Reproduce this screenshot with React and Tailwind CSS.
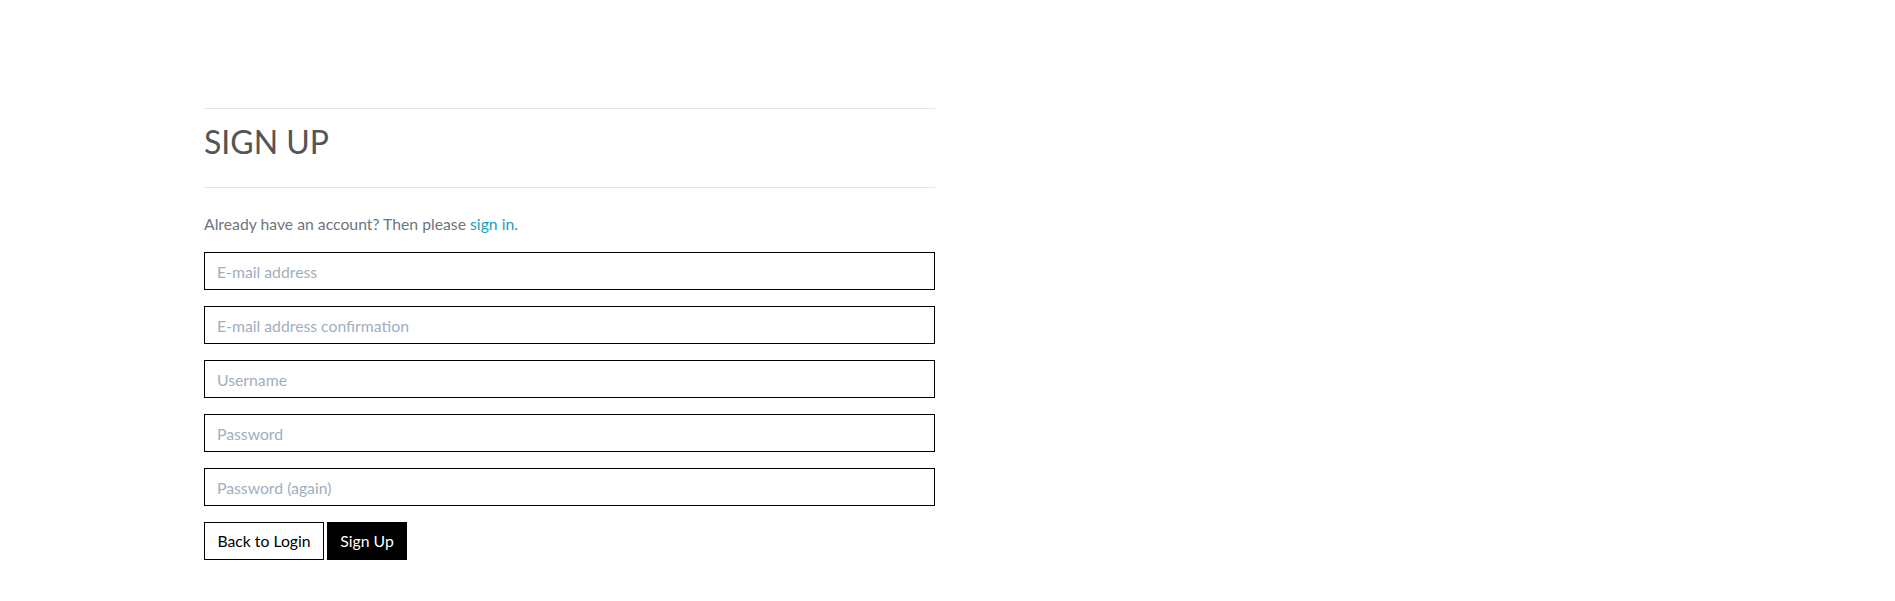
export default function App() {
  const fields = [
    { name: "email", type: "email", placeholder: "E-mail address" },
    { name: "email2", type: "email", placeholder: "E-mail address confirmation" },
    { name: "username", type: "text", placeholder: "Username" },
    { name: "password1", type: "password", placeholder: "Password" },
    { name: "password2", type: "password", placeholder: "Password (again)" },
  ];

  return (
    <div className="min-h-screen bg-white font-['Lato',sans-serif] pt-[108px]">
      <div className="ml-[204px] w-[731px]">
        <div className="border-t border-[#e5e5e5]" />
        <h1 className="mt-[13px] mb-[25px] text-[32px] leading-[40px] text-[#555555] font-normal">
          SIGN UP
        </h1>
        <div className="border-t border-[#e5e5e5]" />

        <p className="mt-[24px] mb-4 text-[15.75px] leading-6 text-[#6c757d]">
          Already have an account? Then please{" "}
          <a href="#" className="text-[#17a2b8]">
            sign in
          </a>
          .
        </p>

        <form onSubmit={(e) => e.preventDefault()}>
          {fields.map((f) => (
            <input
              key={f.name}
              name={f.name}
              type={f.type}
              placeholder={f.placeholder}
              className="block w-full h-[38px] mb-4 px-3 border border-black bg-white text-[15.75px] text-[#333] placeholder:text-[#a0aec0] outline-none"
            />
          ))}

          <div className="flex gap-[3px]">
            <button
              type="button"
              className="w-[120px] h-[38px] border border-black bg-white text-[15.75px] text-black"
            >
              Back to Login
            </button>
            <button
              type="submit"
              className="w-[80px] h-[38px] border border-black bg-black text-[15.75px] text-white"
            >
              Sign Up
            </button>
          </div>
        </form>
      </div>
    </div>
  );
}
